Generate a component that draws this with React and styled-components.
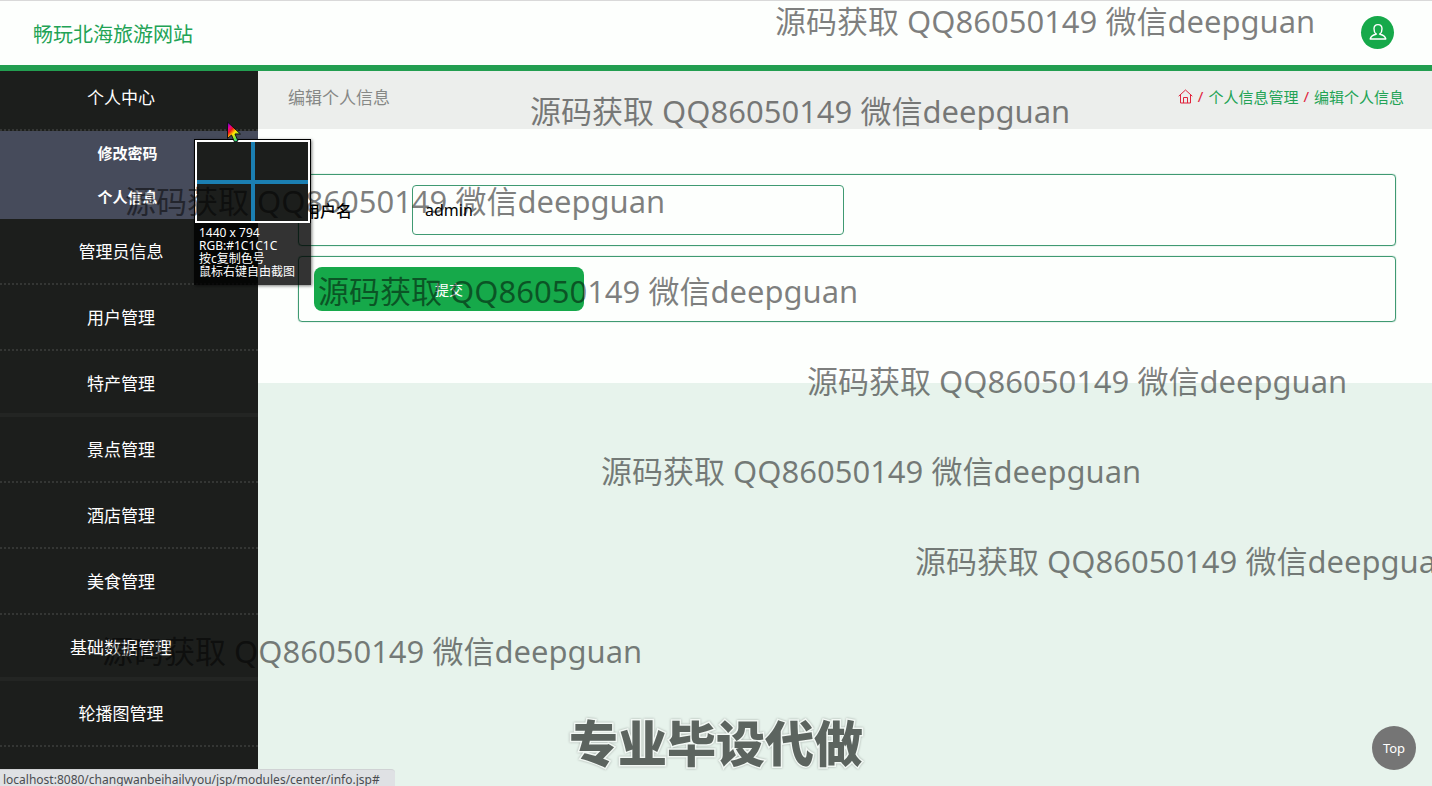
import React, { useState } from 'react';
import styled, { createGlobalStyle } from 'styled-components';

const GlobalStyle = createGlobalStyle`
  * {
    box-sizing: border-box;
  }
  body {
    margin: 0;
    background-color: #e7f3ec;
    font-family: 'Noto Sans', 'Noto Sans CJK SC', sans-serif;
    font-size: 16px;
    color: #000;
  }
  a {
    text-decoration: none;
  }
`;

const Page = styled.div`
  position: relative;
  display: flex;
  flex-direction: column;
  min-height: 100vh;
  overflow: hidden;
`;

const Header = styled.header`
  position: relative;
  display: flex;
  justify-content: space-between;
  align-items: center;
  height: 71px;
  padding: 0 38px 2px 33px;
  background-color: #fdfffd;
  border-top: 1px solid #d9d9d9;
  border-bottom: 6px solid #229e50;
  z-index: 1;

  h1 {
    margin: 0;
    padding-top: 2px;
    color: #22a355;
    font-size: 20px;
    font-weight: 400;
  }
`;

const UserButton = styled.button`
  display: flex;
  justify-content: center;
  align-items: center;
  width: 33px;
  height: 33px;
  padding: 0;
  border: none;
  border-radius: 50%;
  background-color: #16a94a;
`;

const Body = styled.div`
  display: flex;
  flex: 1;
`;

const Sidebar = styled.nav`
  flex: 0 0 258px;
  margin-top: -6px;
  background-color: #1c1e1c;
`;

const MenuLink = styled.a`
  display: flex;
  justify-content: center;
  align-items: center;
  height: 66px;
  padding: ${({ $solid }) => ($solid ? '0 16px 0 0' : '0 16px 2px 0')};
  border-bottom: ${({ $solid }) =>
    $solid ? '4px solid #232523' : '2px dotted #343634'};
  color: #fff;
  font-size: 17px;
`;

const SubMenu = styled.div`
  background-color: #464b5b;

  a {
    display: flex;
    justify-content: center;
    align-items: center;
    height: 44px;
    padding: 0 3px 2px 0;
    color: #fff;
    font-size: 15px;
    font-weight: 700;
  }
`;

const Main = styled.main`
  flex: 1;
`;

const TitleBar = styled.div`
  display: flex;
  justify-content: space-between;
  align-items: center;
  height: 58px;
  padding: 0 28px 8px 30px;
  background-color: #eceeec;

  h2 {
    margin: 0;
    color: #868886;
    font-size: 17px;
    font-weight: 400;
  }
`;

const Crumbs = styled.div`
  display: flex;
  align-items: center;
  gap: 5px;
  color: #e0233c;
  font-size: 15px;

  a {
    display: flex;
    color: #22a355;
  }
`;

const Form = styled.form`
  display: flex;
  flex-direction: column;
  gap: 10px;
  padding: 45px 36px 61px 40px;
  background-color: #fdfffd;
`;

const Field = styled.div`
  display: flex;
  align-items: center;
  padding: 10px 15px;
  border: 1px solid #3f9a72;
  border-radius: 4px;
  box-shadow: 0 0 1px #3f9a72;

  label {
    width: 98px;
    margin-left: -10px;
    white-space: nowrap;
    font-size: 16px;
    font-weight: 500;
  }
  input {
    width: 432px;
    height: 50px;
    margin-left: 10px;
    padding: 0 12px;
    border: 1px solid #3f9a72;
    border-radius: 4px;
    background-color: transparent;
    font-family: inherit;
    font-size: 16px;
  }
`;

const Submit = styled.button`
  width: 270px;
  height: 44px;
  border: none;
  border-radius: 8px;
  background-color: #16a94a;
  color: #fff;
  font-family: inherit;
  font-size: 14px;
`;

const TopButton = styled.button`
  position: absolute;
  right: 16px;
  bottom: 16px;
  width: 44px;
  height: 44px;
  padding: 0;
  border: none;
  border-radius: 50%;
  background-color: #757575;
  color: #fff;
  font-family: inherit;
  font-size: 13px;
`;

const StatusBar = styled.div`
  position: absolute;
  left: 0;
  bottom: 0;
  min-width: 395px;
  height: 17px;
  padding: 0 8px 0 3px;
  border-top: 1px solid #d0d2d4;
  border-top-right-radius: 4px;
  background-color: #dfe1e4;
  color: #4a4c50;
  font-size: 12px;
  line-height: 20px;
  overflow: hidden;
`;

const Picker = styled.div`
  position: absolute;
  top: 139px;
  left: 194px;
  width: 117px;
  background-color: rgba(0, 0, 0, 0.8);
  box-shadow: 1px 1px 3px rgba(0, 0, 0, 0.5);
  color: #fff;
  font-size: 12px;
  line-height: 13px;

  svg {
    display: block;
  }
  p {
    margin: 0;
    padding: 3px 0 7px 5px;
    white-space: nowrap;
  }
`;

const Cursor = styled.svg`
  position: absolute;
  top: 121px;
  left: 226px;
`;

const Marks = styled.div`
  position: absolute;
  top: -24px;
  left: 0;
  width: 100%;
  color: rgba(0, 0, 0, 0.5);
  font-size: 31px;
  line-height: 90px;
  white-space: nowrap;
  pointer-events: none;
  z-index: 2;
`;

const Mark = styled.div`
  height: 90px;
`;

const Banner = styled.div`
  position: absolute;
  bottom: 7px;
  left: 0;
  width: 100%;
  color: #5c645f;
  font-size: 49px;
  font-weight: 900;
  line-height: 72px;
  text-align: center;
  -webkit-text-stroke: 3px #f2f8f4;
  paint-order: stroke fill;
  filter: drop-shadow(0 0 1px #a3aca6);
  pointer-events: none;
`;

const menus = [
  { name: '管理员信息' },
  { name: '用户管理' },
  { name: '特产管理', solid: true },
  { name: '景点管理' },
  { name: '酒店管理' },
  { name: '美食管理' },
  { name: '基础数据管理', solid: true },
  { name: '轮播图管理' },
];

const marks = [775, 530, 125, 318, 807, 601, 915, 102];

function UserIcon() {
  return (
    <svg width="18" height="18" viewBox="0 0 18 18" fill="none" stroke="#fff">
      <path
        strokeWidth="1.4"
        strokeLinejoin="round"
        d="M7 11.2C5.6 10 5 8 5 5.8C5 3.2 6.4 1.6 9 1.6C11.6 1.6 13 3.2 13 5.8C13 8 12.4 10 11 11.2C13.8 11.8 16.2 13 16.8 16H1.2C1.8 13 4.2 11.8 7 11.2ZM7 11.2L7.8 10.6M11 11.2L10.2 10.6"
      />
    </svg>
  );
}

function HomeIcon() {
  return (
    <svg width="15" height="15" viewBox="0 0 15 15" fill="none" stroke="#e0233c">
      <path d="M0.7 7.2L7.5 1L14.3 7.2M2.5 5.8V14H12.5V5.8M5.5 14V8.5H9.5V14" />
    </svg>
  );
}

function ColorPicker() {
  return (
    <>
      <Picker>
        <svg width="117" height="84" viewBox="0 0 117 84">
          <rect width="117" height="84" fill="#000" />
          <rect x="1" y="1" width="115" height="83" fill="#fff" />
          <rect x="3" y="3" width="111" height="79" fill="#1c1e1c" />
          <path d="M59 3V82M3 43H114" stroke="#1b7fb2" strokeWidth="4" />
        </svg>
        <p>
          1440 x 794
          <br />
          RGB:#1C1C1C
          <br />
          按c复制色号
          <br />
          鼠标右键自由截图
        </p>
      </Picker>
      <Cursor width="16" height="22" viewBox="0 0 16 22">
        <defs>
          <linearGradient id="rainbow" x1="0" y1="0" x2="0.7" y2="1">
            <stop offset="0.05" stopColor="#5a00c8" />
            <stop offset="0.25" stopColor="#e6009a" />
            <stop offset="0.4" stopColor="#f01818" />
            <stop offset="0.6" stopColor="#ffe600" />
            <stop offset="0.8" stopColor="#7be63c" />
            <stop offset="1" stopColor="#00d2a0" />
          </linearGradient>
        </defs>
        <path
          d="M1.5 1V17.5L5.5 14L8.5 21L12 20L9 13H14.5Z"
          fill="url(#rainbow)"
          stroke="#111"
        />
      </Cursor>
    </>
  );
}

function App() {
  const [username, setUsername] = useState('admin');

  return (
    <Page>
      <GlobalStyle />
      <Header>
        <h1>畅玩北海旅游网站</h1>
        <UserButton type="button" aria-label="个人中心">
          <UserIcon />
        </UserButton>
      </Header>

      <Body>
        <Sidebar>
          <MenuLink href="#">个人中心</MenuLink>
          <SubMenu>
            <a href="#">修改密码</a>
            <a href="#">个人信息</a>
          </SubMenu>
          {menus.map(({ name, solid }) => (
            <MenuLink key={name} href="#" $solid={solid}>
              {name}
            </MenuLink>
          ))}
        </Sidebar>

        <Main>
          <TitleBar>
            <h2>编辑个人信息</h2>
            <Crumbs>
              <a href="#" aria-label="首页">
                <HomeIcon />
              </a>
              /<a href="#">个人信息管理</a>/<a href="#">编辑个人信息</a>
            </Crumbs>
          </TitleBar>
          <Form onSubmit={(e) => e.preventDefault()}>
            <Field>
              <label htmlFor="username">用户名</label>
              <input
                id="username"
                value={username}
                onChange={(e) => setUsername(e.target.value)}
              />
            </Field>
            <Field>
              <Submit type="submit">提交</Submit>
            </Field>
          </Form>
        </Main>
      </Body>

      <TopButton type="button" onClick={() => window.scrollTo(0, 0)}>
        Top
      </TopButton>
      <Banner>专业毕设代做</Banner>
      <StatusBar>
        localhost:8080/changwanbeihailvyou/jsp/modules/center/info.jsp#
      </StatusBar>
      <ColorPicker />
      <Marks aria-hidden="true">
        {marks.map((left) => (
          <Mark key={left} style={{ marginLeft: left }}>
            源码获取 QQ86050149 微信deepguan
          </Mark>
        ))}
      </Marks>
    </Page>
  );
}

export default App;
